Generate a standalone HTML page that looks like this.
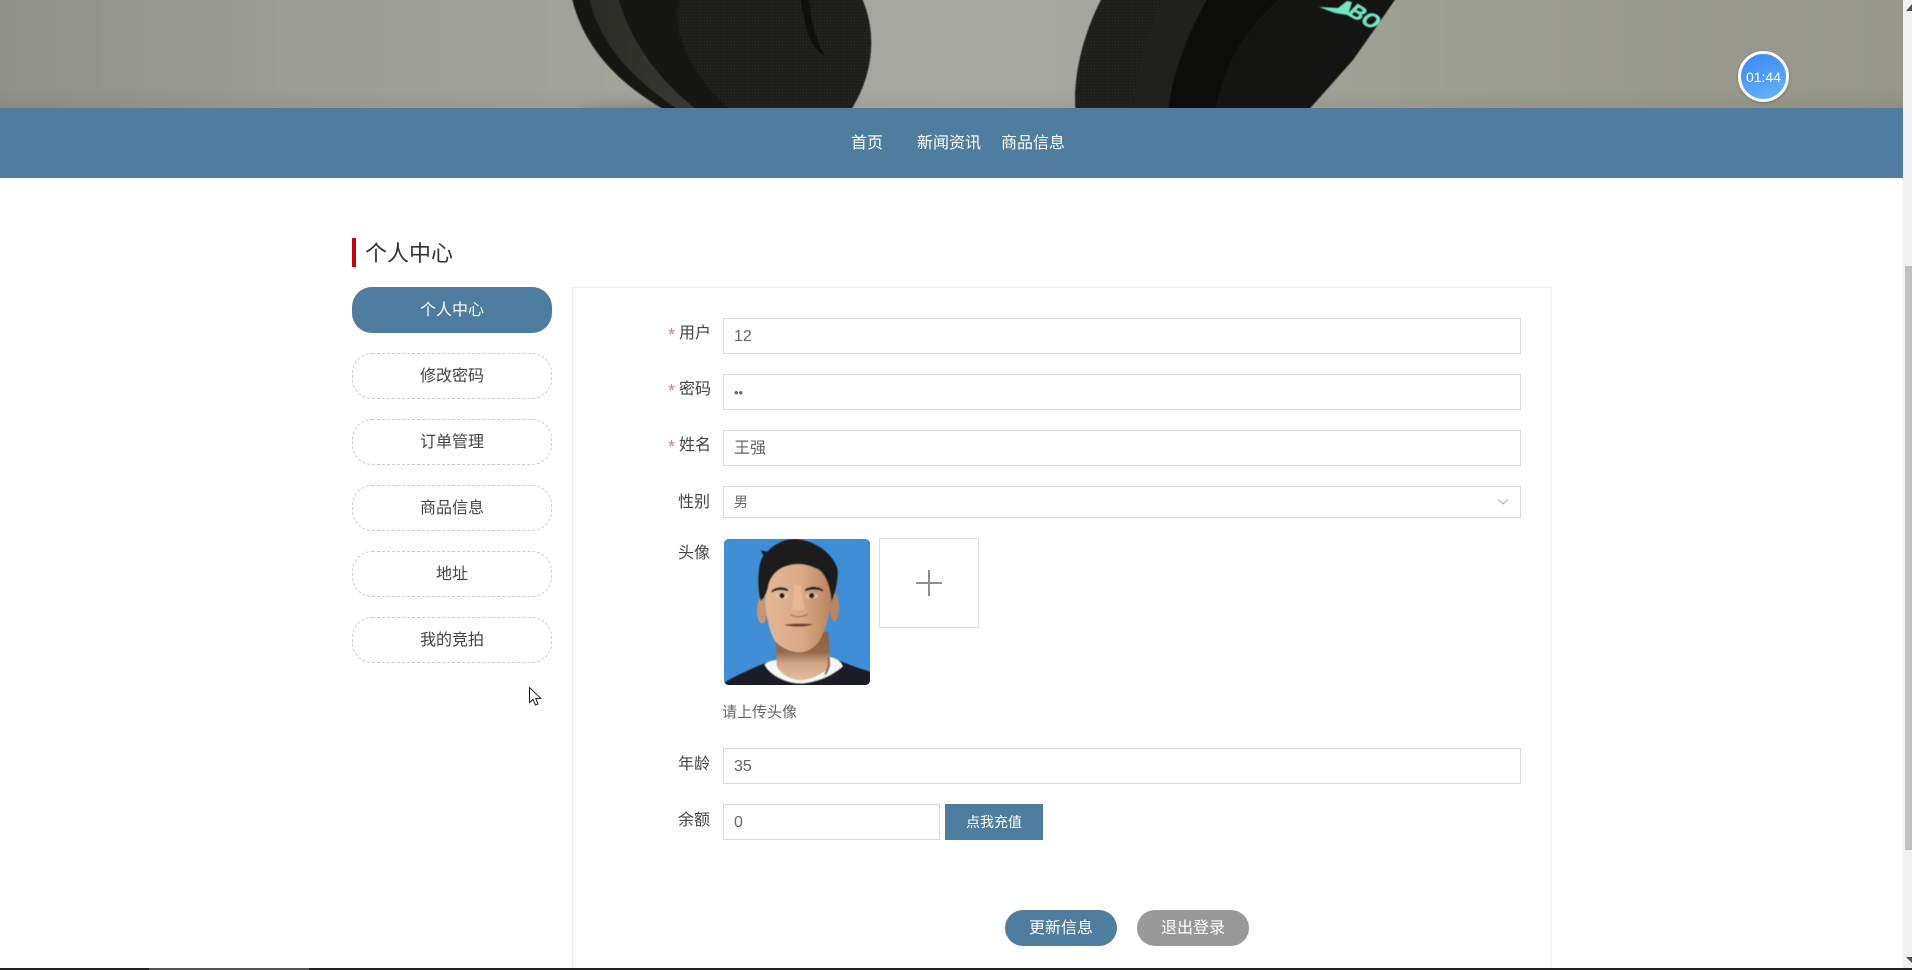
<!DOCTYPE html>
<html lang="zh"><head><meta charset="utf-8"><title>个人中心</title>
<style>
html,body{margin:0;padding:0;width:1912px;height:970px;overflow:hidden;background:#fff}
body{position:relative;font-family:"Liberation Sans","Noto Sans CJK SC",sans-serif;color:#444}
.a{position:absolute;box-sizing:border-box;white-space:nowrap}
.nav{color:#fff;font-size:16px;line-height:24px;top:132px}
.side{left:352px;width:200px;height:46px;border-radius:20px;border:1px dashed #ccc;text-align:center;font-size:16px;line-height:45px;color:#444}
.lab{right:1202px;font-size:16px;line-height:24px;color:#444}
.star{left:668px;font-size:18px;line-height:18px;color:#e5738f}
.inp{left:723px;width:798px;height:36px;border:1px solid #d9d9d9;padding-left:10px;font-size:16px;line-height:35px;color:#666;background:#fff}
.btn{text-align:center;color:#fff}
</style></head><body>

<div class="a" style="left:0;top:0;width:1903px;height:108px;overflow:hidden">
<svg class="a" style="left:-6px;top:-6px;filter:blur(.5px)" width="1915" height="120" viewBox="-6 -6 1915 120">
<defs>
<linearGradient id="bg" x1="0" x2="1" y1="0" y2="0"><stop offset="0" stop-color="#8f9187"/><stop offset=".15" stop-color="#9c9e93"/><stop offset=".5" stop-color="#a8aaa1"/><stop offset=".75" stop-color="#9e9f93"/><stop offset="1" stop-color="#96978a"/></linearGradient>
<linearGradient id="fl" x1="0" x2="0" y1="0" y2="1"><stop offset="0" stop-color="#000" stop-opacity="0"/><stop offset="1" stop-color="#000" stop-opacity=".06"/></linearGradient>
<linearGradient id="rim" x1="0" x2="1" y1="0" y2="0"><stop offset="0" stop-color="#2a2b25"/><stop offset="1" stop-color="#3a3b34"/></linearGradient>
<pattern id="mesh" width="3" height="3" patternUnits="userSpaceOnUse"><rect width="3" height="3" fill="#1f201c"/><circle cx="1" cy="1" r=".8" fill="#121310"/><circle cx="2.4" cy="2.4" r=".6" fill="#2e2f2a"/></pattern>
<clipPath id="rb"><path d="M1103,-6 L1399,-6 L1372,33 L1353,60 L1305,114 L1076,114 Z"/></clipPath>
<filter id="sf" x="-30%" y="-100%" width="160%" height="300%"><feGaussianBlur stdDeviation="5"/></filter>
</defs>
<rect x="-6" y="-6" width="1915" height="120" fill="url(#bg)"/>
<rect x="-6" y="88" width="1915" height="26" fill="url(#fl)"/>
<ellipse cx="640" cy="112" rx="60" ry="5" fill="#1a1a14" opacity=".25" filter="url(#sf)"/>
<path d="M571,-6 C579,32 602,76 672,114 L848,114 C868,86 882,40 860,-6 Z" fill="#161712"/>
<path d="M588,-6 C596,30 616,66 670,104 L684,114 L702,114 C655,78 630,40 617,-6 Z" fill="url(#rim)"/>
<path d="M680,-6 C668,35 695,80 735,114 L848,114 C868,86 882,40 860,-6 Z" fill="url(#mesh)"/>
<path d="M808,-6 C812,30 818,45 825,55 C815,52 806,40 800,-6 Z" fill="#0e0f0c"/>
<path d="M1104,-6 L1399,-6 L1372,33 L1353,60 L1305,114 L1076,114 C1072,80 1082,35 1104,-6 Z" fill="#141513"/>
<path d="M1104,-6 C1082,35 1072,80 1076,114 L1131,114 C1136,70 1150,30 1164,-6 Z" fill="url(#mesh)"/>
<path d="M1164,-6 C1150,30 1136,70 1131,114 L1168,114 C1172,70 1190,30 1210,-6 Z" fill="#20211c"/>
<path d="M1210,-6 C1190,30 1172,70 1168,114 L1215,114 C1222,70 1240,30 1286,-6 Z" fill="#0c0d0b"/>
<g clip-path="url(#rb)">
<path d="M1319,7 L1338,8 L1347,1 L1352,2 L1348,15 L1335,13 Z" fill="#73e6c6"/>
<text transform="translate(1346,14) rotate(30) skewX(-14)" font-family="Liberation Sans" font-weight="bold" font-size="21" fill="#73e6c6" stroke="#73e6c6" stroke-width=".6">BOS</text>
</g>
</svg>
</div>

<div class="a" style="left:0;top:108px;width:1903px;height:70px;background:#4e7da0"></div>
<div class="a nav" style="left:851px">首页</div>
<div class="a nav" style="left:917px">新闻资讯</div>
<div class="a nav" style="left:1001px">商品信息</div>

<div class="a" style="left:1738px;top:51px;width:51px;height:51px;border-radius:50%;border:3px solid #fff;background:linear-gradient(160deg,#3b86f5,#65b5f8);box-shadow:0 1px 3px rgba(0,0,0,.25);color:#fff;font-size:14px;line-height:47px;text-align:center;font-family:'Liberation Sans',sans-serif">01:44</div>

<div class="a" style="left:352px;top:238px;width:4px;height:29px;background:#c00010"></div>
<div class="a" style="left:365px;top:237px;font-size:22px;line-height:34px;color:#333">个人中心</div>

<div class="a side" style="top:287px;background:#4e7da0;border:0;color:#fff;line-height:47px">个人中心</div>
<div class="a side" style="top:353px">修改密码</div>
<div class="a side" style="top:419px">订单管理</div>
<div class="a side" style="top:485px">商品信息</div>
<div class="a side" style="top:551px">地址</div>
<div class="a side" style="top:617px">我的竞拍</div>

<svg class="a" style="left:528px;top:686px" width="16" height="21" viewBox="0 0 16 21"><path d="M1.5,1.5 L1.5,16.5 L5,13.5 L7.5,19 L10,18 L7.8,12.6 L12.8,12.4 Z" fill="#fff" stroke="#222" stroke-width="1"/></svg>

<div class="a" style="left:572px;top:287px;width:980px;height:690px;border:1px solid #eee"></div>

<div class="a star" style="top:326px">*</div>
<div class="a lab" style="top:322px;margin-right:-1px">用户</div>
<div class="a inp" style="top:318px">12</div>
<div class="a star" style="top:382px">*</div>
<div class="a lab" style="top:378px;margin-right:-1px">密码</div>
<div class="a inp" style="top:374px;font-size:13px">••</div>
<div class="a star" style="top:438px">*</div>
<div class="a lab" style="top:434px;margin-right:-1px">姓名</div>
<div class="a inp" style="top:430px">王强</div>
<div class="a lab" style="top:491px">性别</div>
<div class="a inp" style="top:486px;height:32px;line-height:30px;font-size:14px">男</div>
<svg class="a" style="left:1497px;top:498px" width="12" height="8" viewBox="0 0 12 8"><path d="M1,1.5 L6,6 L11,1.5" fill="none" stroke="#aaa" stroke-width="1"/></svg>

<div class="a lab" style="top:542px">头像</div>
<svg class="a" style="left:720px;top:535px" width="155" height="155" viewBox="0 0 465 465">
<defs>
<clipPath id="av"><rect x="12" y="12" width="438" height="438" rx="14"/></clipPath>
<linearGradient id="sk" x1="0" x2="1" y1="0" y2="0"><stop offset="0" stop-color="#e4b797"/><stop offset=".55" stop-color="#dcaa86"/><stop offset="1" stop-color="#b8855f"/></linearGradient>
<linearGradient id="nk" x1="0" x2="0" y1="0" y2="1"><stop offset="0" stop-color="#8d6045"/><stop offset=".42" stop-color="#966a4d"/><stop offset=".65" stop-color="#d2a685"/><stop offset="1" stop-color="#e3bda0"/></linearGradient>
<filter id="sb" x="-5%" y="-5%" width="110%" height="110%"><feGaussianBlur stdDeviation="1.8"/></filter>
</defs>
<g clip-path="url(#av)">
<rect width="465" height="465" fill="#408fd6"/>
<g filter="url(#sb)">
<path d="M10,455 L14,442 C60,415 110,395 140,382 L335,365 C370,385 420,400 455,412 L455,455 Z" fill="#1b1b27"/>
<path d="M134,388 C145,378 160,375 172,376 L325,364 C345,368 362,376 368,394 C340,418 300,440 245,445 C200,445 150,422 134,388 Z" fill="#f7f8f8"/>
<path d="M168,300 L170,392 C182,420 215,436 245,436 C280,432 315,412 332,394 L325,290 Z" fill="url(#nk)"/>
<ellipse cx="126" cy="226" rx="15" ry="40" fill="#c99672"/>
<ellipse cx="343" cy="216" rx="14" ry="42" fill="#b98463"/>
<path d="M134,170 C130,110 180,70 240,72 C300,74 336,120 332,190 C330,240 318,285 295,322 C275,345 255,352 235,352 C210,350 185,340 165,318 C145,285 136,230 134,170 Z" fill="url(#sk)"/>
<path d="M122,198 C110,150 114,85 130,62 L122,46 L142,50 C160,30 190,12 225,12 C280,15 335,50 352,100 C356,130 347,170 335,200 C332,165 322,125 298,105 C260,85 230,84 205,92 C170,100 148,128 144,158 C140,172 135,188 122,198 Z" fill="#1c1a1b"/>
<path d="M154,168 C168,154 188,154 205,163 L203,169 C188,163 170,163 155,173 Z" fill="#2a2120"/>
<path d="M255,163 C272,152 295,153 310,165 L309,170 C295,162 272,162 256,169 Z" fill="#2a2120"/>
<ellipse cx="186" cy="183" rx="19" ry="8" fill="#e2c4ae"/>
<ellipse cx="275" cy="183" rx="19" ry="8" fill="#dcbda5"/>
<circle cx="186" cy="182" r="8" fill="#2b1d18"/>
<circle cx="275" cy="182" r="8" fill="#2b1d18"/>
<path d="M210,236 C222,246 250,246 264,234 L262,241 C250,249 222,249 212,242 Z" fill="#a87759"/>
<path d="M192,270 C215,265 250,265 280,268 C260,277 215,277 192,270 Z" fill="#6e3f35"/>
<path d="M222,150 C222,190 216,210 216,225 L255,225 C250,200 244,170 244,150 Z" fill="#ecc2a2" opacity=".55"/>
<path d="M326,366 C332,385 330,405 318,420 L312,418 C322,400 326,385 322,370 Z" fill="#8d6f5e"/>
</g>
</g>
</svg>
<div class="a" style="left:879px;top:538px;width:100px;height:90px;border:1px solid #ddd"></div>
<div class="a" style="left:916px;top:582px;width:26px;height:2px;background:#8f8f8f"></div>
<div class="a" style="left:928px;top:570px;width:2px;height:26px;background:#8f8f8f"></div>
<div class="a" style="left:722px;top:701px;font-size:15px;line-height:24px;color:#666">请上传头像</div>

<div class="a lab" style="top:753px">年龄</div>
<div class="a inp" style="top:748px">35</div>
<div class="a lab" style="top:809px">余额</div>
<div class="a inp" style="top:804px;width:217px">0</div>
<div class="a btn" style="left:945px;top:804px;width:98px;height:36px;background:#4e7da0;font-size:14px;line-height:37px">点我充值</div>

<div class="a btn" style="left:1005px;top:910px;width:112px;height:36px;border-radius:18px;background:#4e7da0;font-size:16px;line-height:37px">更新信息</div>
<div class="a btn" style="left:1137px;top:910px;width:112px;height:36px;border-radius:18px;background:#999;font-size:16px;line-height:37px">退出登录</div>

<div class="a" style="left:1903px;top:0;width:9px;height:968px;background:#f1f1f1"></div>
<div class="a" style="left:1905px;top:266px;width:7px;height:584px;background:#c1c1c1"></div>
<svg class="a" style="left:1906px;top:3px" width="6" height="8"><path d="M6,1 L6,8 L0,8 Z" fill="#505050"/></svg>
<svg class="a" style="left:1906px;top:955px" width="6" height="8"><path d="M0,2 L6,2 L6,8 Z" fill="#505050"/></svg>
<div class="a" style="left:0;top:968px;width:1912px;height:2px;background:#222"></div>
<div class="a" style="left:149px;top:968px;width:160px;height:2px;background:#555"></div>
</body></html>
